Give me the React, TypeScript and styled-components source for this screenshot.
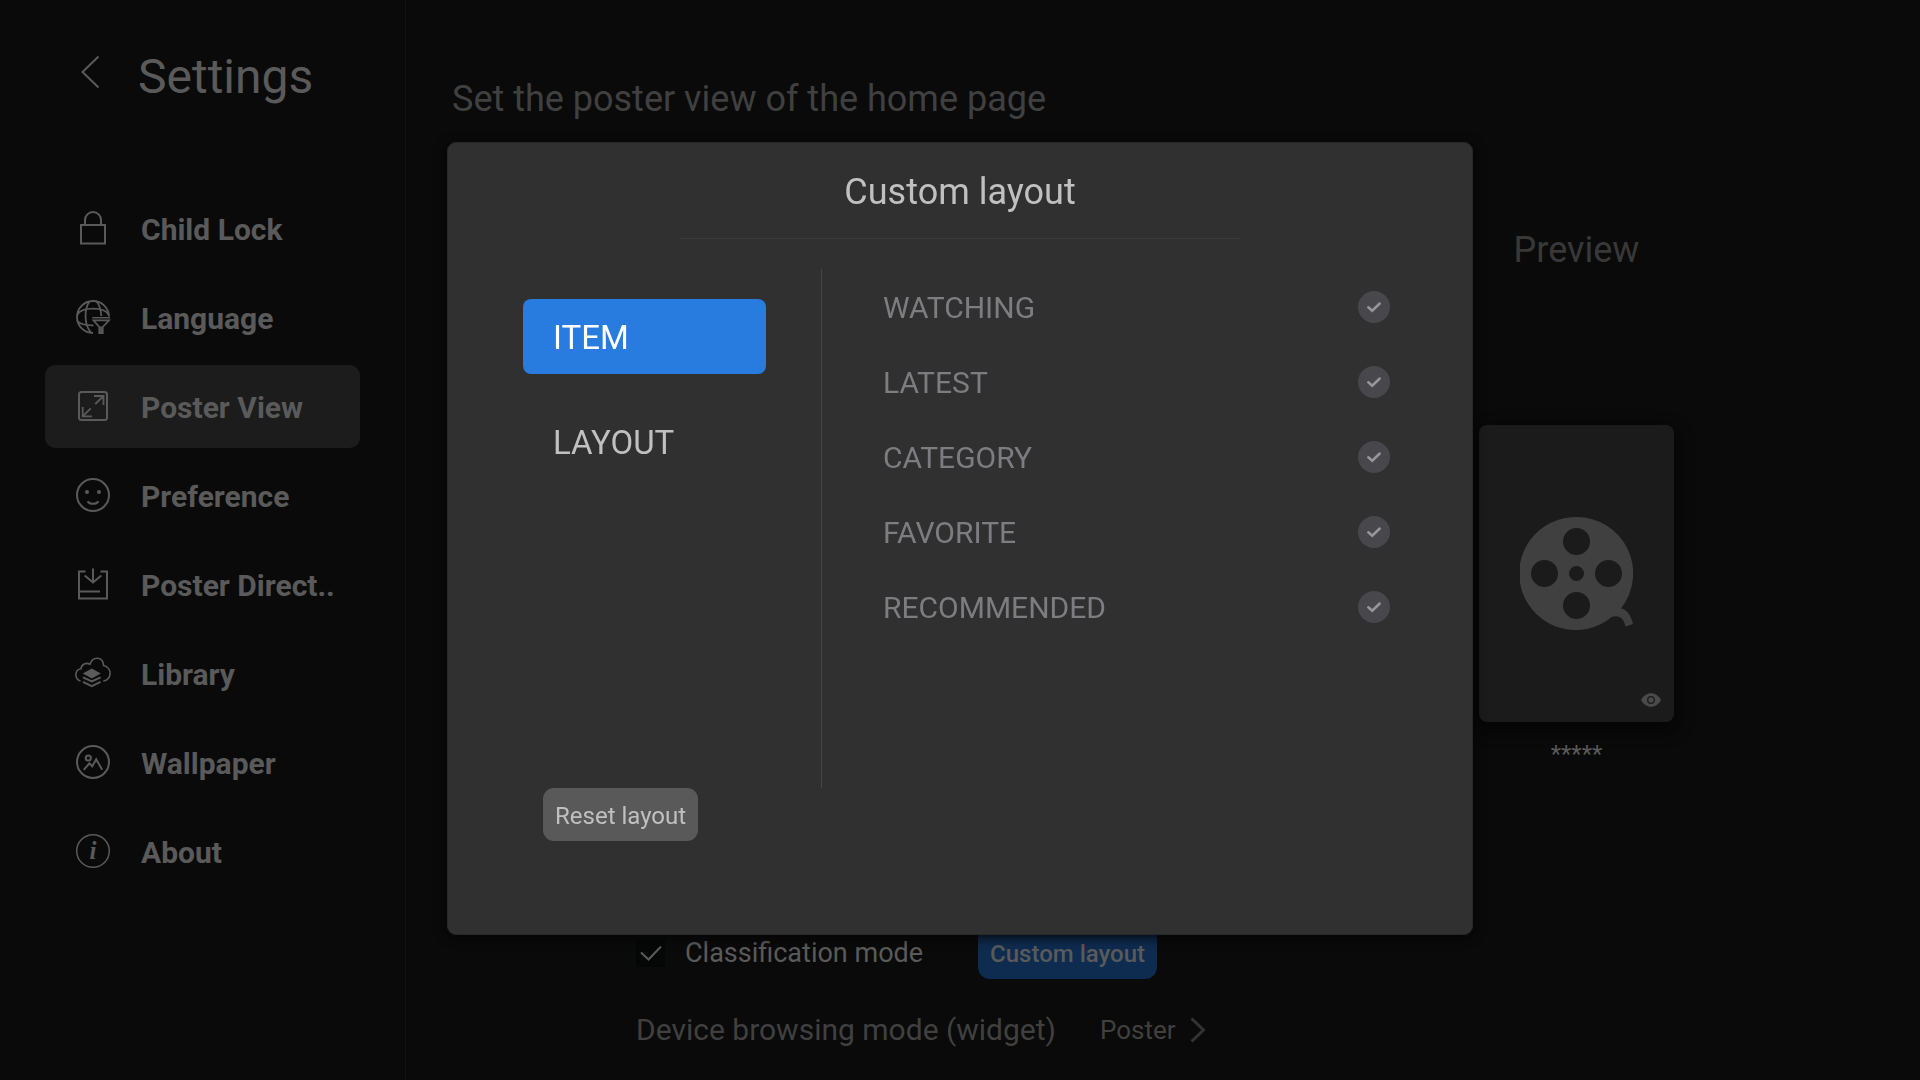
import React, { useState } from 'react';
import styled, { createGlobalStyle } from 'styled-components';

const GlobalStyle = createGlobalStyle`
  * { box-sizing: border-box; }
  body {
    margin: 0;
    background: #0a0a0a;
    font-family: Roboto, "Liberation Sans", sans-serif;
    color: #5a5a5a;
  }
  button, input { font: inherit; color: inherit; margin: 0; }
  button { border: 0; background: none; padding: 0; cursor: pointer; text-align: left; }
  svg { display: block; flex: none; }
`;

const Page = styled.div`
  display: flex;
  min-height: 100vh;
`;

const Sidebar = styled.aside`
  flex: 0 0 406px;
  min-width: 0;
  padding: 48px 45px 0;
  border-right: 1px solid #131313;
`;

const SidebarHeader = styled.header`
  display: flex;
  gap: 27px;
  padding-left: 30px;
  margin-bottom: 82px;
`;

const BackButton = styled.button`
  height: 48px;
`;

const PageTitle = styled.h1`
  margin: 0;
  padding-top: 1px;
  font-size: 48px;
  font-weight: 400;
  line-height: 56px;
`;

const Menu = styled.nav`
  display: flex;
  flex-direction: column;
  gap: 6px;
`;

const MenuItem = styled.button<{ $active: boolean }>`
  display: flex;
  align-items: center;
  gap: 30px;
  height: 83px;
  padding: 0 20px 1px 30px;
  border-radius: 10px;
  background: ${(p) => (p.$active ? '#1c1c1c' : 'transparent')};
  font-size: 30px;
  font-weight: 700;
  white-space: nowrap;
`;

const MenuText = styled.span`
  padding-top: 3px;
`;

const Icon = styled.svg`
  width: 36px;
  height: 36px;
  fill: none;
  stroke: currentColor;
  stroke-width: 2;
`;

const Main = styled.main`
  flex: 1;
  display: flex;
  flex-direction: column;
  padding: 78px 246px 28px 46px;
`;

const Heading = styled.h2`
  margin: 0;
  font-size: 36px;
  font-weight: 400;
  line-height: 42px;
  color: #404040;
`;

const Content = styled.div`
  flex: 1;
  display: flex;
  justify-content: space-between;
`;

const Options = styled.div`
  display: flex;
  flex-direction: column;
  justify-content: flex-end;
  gap: 29px;
  padding-left: 184px;
`;

const OptionRow = styled.div<{ $gap: number }>`
  display: flex;
  align-items: center;
  gap: ${(p) => p.$gap}px;
`;

const ModeLabel = styled.label`
  display: flex;
  align-items: center;
  gap: 20px;
  font-size: 27px;
`;

const BoxHolder = styled.span`
  display: grid;
  width: 29px;
  height: 29px;
  > * { grid-area: 1 / 1; }
`;

const ModeBox = styled.input`
  appearance: none;
  background: #050707;
  & + svg { visibility: hidden; pointer-events: none; }
  &:checked + svg { visibility: visible; }
`;

const LayoutButton = styled.button`
  height: 53px;
  padding: 2px 12px 0;
  border-radius: 12px;
  background: #0e2b50;
  font-size: 24px;
  font-weight: 500;
`;

const WidgetLabel = styled.span`
  font-size: 30px;
  line-height: 44px;
  color: #404040;
`;

const ValueButton = styled.button`
  display: flex;
  align-items: center;
  gap: 14px;
  font-size: 26px;
  color: #404040;
`;

const Preview = styled.section`
  display: flex;
  flex-direction: column;
  align-items: center;
  width: 195px;
  padding-top: 109px;
`;

const PreviewTitle = styled.h3`
  margin: 0 0 154px;
  font-size: 36px;
  font-weight: 400;
  line-height: 42px;
  color: #383838;
`;

const Poster = styled.div`
  display: grid;
  place-items: center;
  align-self: stretch;
  height: 297px;
  border-radius: 8px;
  background: #1b1b1b;
  box-shadow: 0 6px 18px #040404;
  > * { grid-area: 1 / 1; }
`;

const EyeIcon = styled.svg`
  place-self: end;
  margin: 0 13px 15px 0;
`;

const PosterName = styled.span`
  margin-top: 16px;
  font-size: 24px;
  line-height: 32px;
`;

const Scrim = styled.div`
  position: fixed;
  inset: 0;
  display: grid;
  place-items: center;
  padding-bottom: 3px;
`;

const Dialog = styled.section`
  width: min(1026px, 100%);
  padding: 28px 75px 93px;
  border: 1px solid #282828;
  border-radius: 9px;
  background: #303030;
  box-shadow: 0 2px 12px #050506;
`;

const DialogTitle = styled.h2`
  width: 560px;
  margin: 0 auto 30px;
  padding-bottom: 25px;
  border-bottom: 1px solid #3b3b3b;
  font-size: 36px;
  font-weight: 400;
  line-height: 42px;
  text-align: center;
  color: #c0c0c0;
`;

const DialogBody = styled.div`
  display: flex;
`;

const Tabs = styled.div`
  display: flex;
  flex-direction: column;
  gap: 30px;
  width: 298px;
  min-height: 519px;
  padding: 30px 55px 0 0;
`;

const Tab = styled.button<{ $active: boolean }>`
  height: 75px;
  padding: 2px 30px 0;
  border-radius: 8px;
  background: ${(p) => (p.$active ? '#287cdf' : 'transparent')};
  color: ${(p) => (p.$active ? '#ffffff' : '#c0c0c0')};
  font-size: 33px;
`;

const ItemList = styled.ul`
  flex: 1;
  margin: 0;
  padding: 0 7px 0 61px;
  border-left: 1px solid #464646;
  list-style: none;
`;

const ItemLabel = styled.label`
  display: flex;
  align-items: center;
  justify-content: space-between;
  height: 75px;
  font-size: 30px;
  color: #7d7d81;
`;

const ItemText = styled.span`
  padding-top: 2px;
`;

const CheckHolder = styled.span`
  display: grid;
  width: 32px;
  height: 32px;
  > * { grid-area: 1 / 1; }
`;

const ItemCheck = styled.input`
  appearance: none;
  border-radius: 50%;
  background: #48484c;
  & + svg { visibility: hidden; pointer-events: none; }
  &:checked + svg { visibility: visible; }
`;

const ResetButton = styled.button`
  display: block;
  height: 53px;
  margin-left: 20px;
  padding: 2px 12px 0;
  border-radius: 11px;
  background: #595959;
  color: #c0c0c0;
  font-size: 24px;
`;

const MENU: { name: string; art: React.ReactNode }[] = [
  {
    name: 'Child Lock',
    art: (
      <>
        <rect x="6" y="15" width="24" height="18.5" />
        <path d="M10 15V10a8 8 0 0 1 16 0v5" />
      </>
    ),
  },
  {
    name: 'Language',
    art: (
      <g strokeWidth="1.8">
        <path d="M34 17.500A16 16 0 1 0 18 34" />
        <path d="M2.300 16C6 7.500 30 7.500 33.700 16M2.300 22C6 26 12 26.500 18.500 26.300" />
        <path d="M14.500 2.500C9 10 9 26 16 33.500M21.500 2.500C24.500 6 26 11 26.300 17" />
        <path d="M17.300 18.700H35" strokeWidth="1.400" />
        <path d="M18.500 21.300H34L27.700 28v6h-3.400v-6z" />
        <path d="M26 27.500v7" />
      </g>
    ),
  },
  {
    name: 'Poster View',
    art: (
      <>
        <rect x="4" y="4" width="28" height="28" rx="2.5" />
        <path d="M19 8h9.500v9M28 8.500l-7.700 7.500M7.700 19v9.300H17M8.200 27.800l7.500-7.500" strokeWidth="1.800" />
      </>
    ),
  },
  {
    name: 'Preference',
    art: (
      <>
        <circle cx="18" cy="18" r="16" />
        <g fill="currentColor" stroke="none">
          <circle cx="12" cy="15" r="2" />
          <circle cx="24" cy="15" r="2" />
        </g>
        <path d="M12.500 24.300c2.500 3.300 8.500 3.300 11 0" />
      </>
    ),
  },
  {
    name: 'Poster Direct..',
    art: <path d="M10.500 5.500H4v27h28v-27h-6.500M18 2.500v14M9.700 9.500l8.300 7 8.300-7M4 25.500h21" />,
  },
  {
    name: 'Library',
    art: (
      <>
        <path
          d="M5.500 26C-.8 24 -.6 14.500 6 13.700C6.300 9.500 11 7 15 9.200C18 .8 28 1.500 28.600 10.500C37.500 12.500 37 25 28.300 26"
          strokeWidth="1.600"
        />
        <path d="M16.800 13.500l9 5-9 5-9-5z" fill="currentColor" stroke="none" />
        <path d="M8 22.300l8.800 4.200 8.800-4.200M8 26.900l8.800 4.200 8.800-4.200" />
      </>
    ),
  },
  {
    name: 'Wallpaper',
    art: (
      <>
        <circle cx="18" cy="18" r="16" />
        <circle cx="13.300" cy="14" r="2.600" />
        <path d="M8.700 25.800l5.800-6.500 2.700 3 4-7 6 10.500" />
      </>
    ),
  },
  {
    name: 'About',
    art: (
      <>
        <circle cx="18" cy="18" r="16.300" strokeWidth="1.500" />
        <text
          x="18"
          y="26"
          textAnchor="middle"
          fill="currentColor"
          stroke="none"
          fontFamily="'Liberation Serif', serif"
          fontStyle="italic"
          fontWeight="700"
          fontSize="25"
        >
          i
        </text>
      </>
    ),
  },
];

const ITEMS = ['WATCHING', 'LATEST', 'CATEGORY', 'FAVORITE', 'RECOMMENDED'];

function ItemRow({ name }: { name: string }) {
  return (
    <li>
      <ItemLabel>
        <ItemText>{name}</ItemText>
        <CheckHolder>
          <ItemCheck type="checkbox" defaultChecked />
          <svg width="32" height="32" viewBox="0 0 32 32" fill="none" stroke="#97979a" strokeWidth="2.500" strokeLinecap="round">
            <path d="M10.300 16.300l3.900 3.400 7.500-7.200" />
          </svg>
        </CheckHolder>
      </ItemLabel>
    </li>
  );
}

export default function App() {
  const [page, setPage] = useState('Poster View');
  const [tab, setTab] = useState('ITEM');

  return (
    <>
      <GlobalStyle />
      <Page>
        <Sidebar>
          <SidebarHeader>
            <BackButton aria-label="Back">
              <Icon viewBox="0 0 36 36">
                <path d="M23.500 2.500L7.500 18l16 15.500" />
              </Icon>
            </BackButton>
            <PageTitle>Settings</PageTitle>
          </SidebarHeader>
          <Menu>
            {MENU.map((item) => (
              <MenuItem key={item.name} $active={item.name === page} onClick={() => setPage(item.name)}>
                <Icon viewBox="0 0 36 36">{item.art}</Icon>
                <MenuText>{item.name}</MenuText>
              </MenuItem>
            ))}
          </Menu>
        </Sidebar>

        <Main>
          <Heading>Set the poster view of the home page</Heading>
          <Content>
            <Options>
              <OptionRow $gap={55}>
                <ModeLabel>
                  <BoxHolder>
                    <ModeBox type="checkbox" defaultChecked />
                    <svg width="29" height="29" viewBox="0 0 29 29" fill="none" stroke="#5a5a5a" strokeWidth="2">
                      <path d="M5 14.500l7.500 7L25 8.500" />
                    </svg>
                  </BoxHolder>
                  Classification mode
                </ModeLabel>
                <LayoutButton>Custom layout</LayoutButton>
              </OptionRow>
              <OptionRow $gap={44}>
                <WidgetLabel>Device browsing mode (widget)</WidgetLabel>
                <ValueButton>
                  Poster
                  <svg width="16" height="26" viewBox="0 0 16 26" fill="none" stroke="#333333" strokeWidth="3">
                    <path d="M1.500 1.500L13.500 13l-12 11.500" />
                  </svg>
                </ValueButton>
              </OptionRow>
            </Options>
            <Preview>
              <PreviewTitle>Preview</PreviewTitle>
              <Poster>
                <svg width="113" height="113" viewBox="0.5 0.5 113 113">
                  <path
                    fill="#404040"
                    fillRule="evenodd"
                    d="M57 .5a56.500 56.500 0 0 1 44.500 91.500c6 1 10 7 12 15.500l-7.500 2.500c-1.500-8-6-12-13.500-9.700A56.500 56.500 0 1 1 57 .5zM57 11.500a13.500 13.500 0 1 0 0 27 13.500 13.500 0 0 0 0-27zM57 75.500a13.500 13.500 0 1 0 0 27 13.500 13.500 0 0 0 0-27zM25 43.500a13.500 13.500 0 1 0 0 27 13.500 13.500 0 0 0 0-27zM89 43.500a13.500 13.500 0 1 0 0 27 13.500 13.500 0 0 0 0-27zM57 49.500a7.500 7.500 0 1 0 0 15 7.500 7.500 0 0 0 0-15z"
                  />
                </svg>
                <EyeIcon width="20" height="14" viewBox="0 0 20 14">
                  <path d="M0 7C4.500-2 15.500-2 20 7C15.500 16 4.500 16 0 7z" fill="#4a4a4a" />
                  <circle cx="10" cy="7" r="3.300" fill="#4a4a4a" stroke="#1b1b1b" strokeWidth="1.300" />
                </EyeIcon>
              </Poster>
              <PosterName>*****</PosterName>
            </Preview>
          </Content>
        </Main>
      </Page>

      <Scrim>
        <Dialog role="dialog" aria-modal="true" aria-labelledby="layout-title">
          <DialogTitle id="layout-title">Custom layout</DialogTitle>
          <DialogBody>
            <Tabs>
              {['ITEM', 'LAYOUT'].map((name) => (
                <Tab key={name} $active={name === tab} onClick={() => setTab(name)}>
                  {name}
                </Tab>
              ))}
            </Tabs>
            <ItemList>
              {ITEMS.map((name) => (
                <ItemRow key={name} name={name} />
              ))}
            </ItemList>
          </DialogBody>
          <ResetButton>Reset layout</ResetButton>
        </Dialog>
      </Scrim>
    </>
  );
}
